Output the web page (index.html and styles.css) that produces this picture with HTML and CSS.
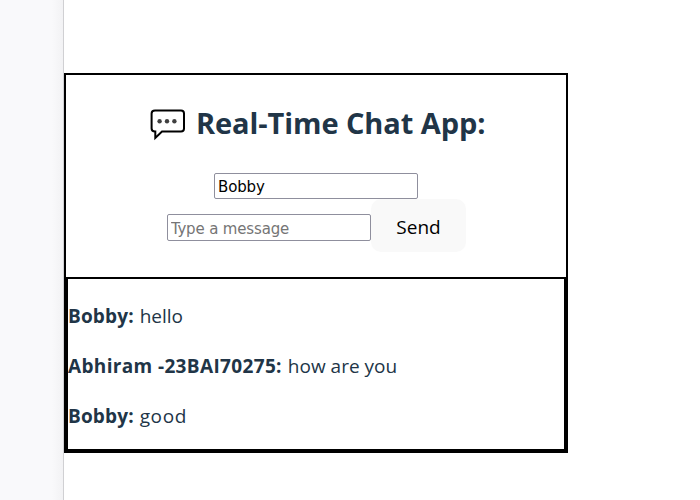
FILE: index.html
```html
<!DOCTYPE html>
<html lang="en">
<head>
<meta charset="utf-8">
<title>Real-Time Chat App</title>
<link rel="stylesheet" href="styles.css">
</head>
<body>
<div class="sidebar"></div>
<main class="chat">
  <h2 class="title">
    <svg class="bubble" width="36" height="32" viewBox="0 0 36 32">
      <path d="M5 1.5H31Q34 1.5 34 4.5V19.6Q34 22.6 31 22.6H12L5.3 29V22.6H5Q1.6 22.6 1.6 19.6V4.5Q1.6 1.5 5 1.5Z" fill="#fff" stroke="#000" stroke-width="2"/>
      <g fill="#404040"><circle cx="9.6" cy="12.3" r="2.2"/><circle cx="17" cy="12.3" r="2.2"/><circle cx="24.4" cy="12.3" r="2.2"/></g>
    </svg>
    <span>Real-Time Chat App:</span>
  </h2>
  <div class="name-row"><input class="field" type="text" value="Bobby"></div>
  <div class="message-row"><input class="field field-message" type="text" placeholder="Type a message"><button class="send">Send</button></div>
  <div class="messages">
    <p><strong>Bobby:</strong> <span>hello</span></p>
    <p><strong class="long">Abhiram -23BAI70275:</strong> <span>how are you</span></p>
    <p><strong>Bobby:</strong> <span class="reply">good</span></p>
  </div>
</main>
</body>
</html>
```
FILE: styles.css
```css
* { box-sizing: border-box; }
body {
  margin: 0;
  height: 500px;
  display: flex;
  align-items: flex-start;
  overflow: hidden;
  background: #fff;
  color: #213547;
  font: 20px/30px "Segoe UI", "Open Sans", "Noto Sans", sans-serif;
}
.sidebar {
  width: 64px;
  height: 500px;
  border-right: 1px solid #d0d0d3;
  background: linear-gradient(to right, #f9f9fb 52px, #f2f2f4 63px);
}
.chat {
  width: 504px;
  height: 380px;
  margin-top: 73px;
  border: 2px solid #000;
}
.title {
  display: flex;
  height: 45px;
  margin: 25px 0 28px;
  padding-left: 84px;
  font-size: 29px;
  line-height: 45px;
  letter-spacing: -0.08px;
  white-space: nowrap;
}
.bubble { flex: none; margin: 9px 10px 0 0; }
.name-row, .message-row {
  display: flex;
  justify-content: center;
}
.name-row { height: 26px; }
.message-row { align-items: flex-start; height: 78px; padding-left: 1px; }
.field {
  width: 204px;
  height: 26px;
  margin: 0;
  padding: 2px 3px 1px;
  border: 1px solid #8f8f9d;
  border-radius: 2px;
  background: #fff;
  color: #000;
  font: 16.67px "Tahoma", "DejaVu Sans Condensed", "DejaVu Sans", sans-serif;
  font-stretch: condensed;
  letter-spacing: -0.15px;
}
.field-message { height: 27px; margin-top: 15px; }
.field::placeholder { color: #757575; opacity: 1; }
.send {
  width: 95px;
  height: 53px;
  padding: 3px 0 0;
  border: 0;
  border-radius: 10px;
  background: #f9f9f9;
  color: #000;
  font: inherit;
  font-size: 19px;
}
.messages {
  height: 174px;
  border: 2px solid #000;
}
.messages p {
  display: flex;
  gap: 6px;
  margin: 20px 0;
  font-size: 19px;
  white-space: nowrap;
}
.messages p:first-child { margin-top: 22px; }
.messages strong { letter-spacing: 0.15px; }
.messages .long { letter-spacing: 0.35px; }
.messages .reply { letter-spacing: 0.6px; }
```
